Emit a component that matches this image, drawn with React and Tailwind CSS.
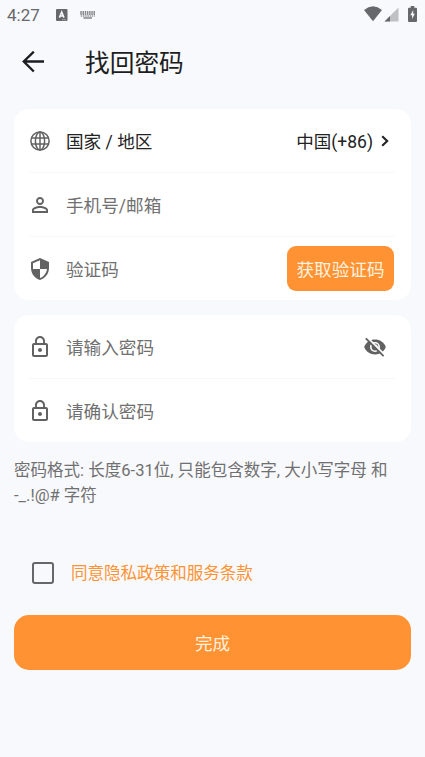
import { MdLockOutline, MdPersonOutline, MdSecurity } from 'react-icons/md';

const GlobeIcon = ({ className }) => (
  <svg className={className} viewBox="0 0 24 24" fill="none" stroke="currentColor" strokeWidth="1.5">
    <circle cx="12" cy="12" r="9.1" />
    <ellipse cx="12" cy="12" rx="4.6" ry="9.1" />
    <path d="M12 3v18M3.6 9h16.8M3.6 15h16.8" />
  </svg>
);

const EyeOffIcon = ({ className }) => (
  <svg className={className} viewBox="0 0 24 24">
    <path d="M1.2 12C3 7.2 7.2 4.6 12 4.6S21 7.2 22.8 12c-1.8 4.8-6 7.4-10.8 7.4S3 16.8 1.2 12z" fill="currentColor" />
    <circle cx="12" cy="12" r="4.2" fill="currentColor" stroke="#ffffff" strokeWidth="1.6" />
    <path d="M13 9.8q1.4.6 1.4 2" fill="none" stroke="#ffffff" strokeWidth="1" />
    <path d="M4 2.2 21.8 20" stroke="#ffffff" strokeWidth="1.8" />
    <path d="M2.8 3.4 20.6 21.2" stroke="currentColor" strokeWidth="1.9" />
  </svg>
);

const StatusBar = () => (
  <div className="flex h-7 items-center pl-[7px] pr-2 text-[#67686b]">
    <span className="w-[49px] pt-0.5 text-[17px] leading-7">4:27</span>
    <svg className="mt-px h-3 w-3" viewBox="0 0 12 12">
      <rect width="11.5" height="12" rx="1" fill="currentColor" />
      <path d="M3.4 8.6 5.7 3l2.3 5.6M4.2 7h3" fill="none" stroke="#f8f9fd" strokeWidth="1.5" />
      <path d="M6.3 10.8h1M8.5 10.8h1" stroke="#f8f9fd" strokeWidth="0.9" />
    </svg>
    <svg className="ml-3 mt-px h-2 w-4" viewBox="0 0 16 8">
      <path d="M0.3 1h15M0.3 3h15" stroke="currentColor" strokeWidth="1.3" strokeDasharray="1.5 0.7" />
      <path d="M0.8 5h14" stroke="currentColor" strokeWidth="1.2" strokeDasharray="1.5 0.7" />
      <path d="M3.5 7h8.5" stroke="currentColor" strokeWidth="1.2" />
    </svg>
    <div className="ml-auto flex items-center">
      <svg className="h-4 w-[18px]" viewBox="0 0 18 16">
        <path d="M0 4Q9-3.4 18 4L9 15.3z" fill="currentColor" />
      </svg>
      <svg className="ml-0.5 h-[15px] w-[15px]" viewBox="0 0 15 15">
        <path d="M0.5 14.5 14.5 0.5v14z" fill="#bfc0c2" />
        <path d="M0.5 14.5 6 9v5.5z" fill="currentColor" />
      </svg>
      <svg className="ml-[9px] mb-px h-4 w-[9px]" viewBox="0 0 9 16">
        <path d="M1 1.8h1.7V0h3.6v1.8H8a1 1 0 0 1 1 1V15a1 1 0 0 1-1 1H1a1 1 0 0 1-1-1V2.8a1 1 0 0 1 1-1z" fill="currentColor" />
        <path d="M5.2 4 2.3 9.2h1.8V13L6.8 7.8H5.2z" fill="#f8f9fd" />
      </svg>
    </div>
  </div>
);

const Header = () => (
  <div className="flex h-[68px] items-center pl-[22px]">
    <svg className="h-[22px] w-[22px]" viewBox="0 0 22 22" fill="none" stroke="#1d1e20" strokeWidth="2.4">
      <path d="M22 10.5H2M11.8 0.7 1.8 10.5l10 10" />
    </svg>
    <h1 className="ml-[41px] pt-[3px] text-[24.7px] leading-9 text-[#1d1e20]">找回密码</h1>
  </div>
);

const Row = ({ icon: Icon, label, dark, children }) => (
  <div className="flex h-[63px] items-center">
    <Icon className="h-6 w-6 shrink-0 text-[#626262]" />
    <span className={`ml-3.5 pt-[3px] text-[17.6px] ${dark ? 'text-[#222222]' : 'text-[#707070]'}`}>{label}</span>
    {children && <div className="ml-auto flex items-center">{children}</div>}
  </div>
);

const Divider = () => <div className="ml-px mr-4 h-px bg-[#f8f8f8]" />;

const App = () => {
  return (
    <div className="h-[757px] w-[425px] overflow-hidden bg-[#f8f9fd] font-[Roboto,'Noto_Sans_CJK_SC',sans-serif]">
      <StatusBar />
      <Header />

      <div className="px-3.5 pt-[13px]">
        {/* Account */}
        <div className="rounded-[15px] bg-white pl-3.5">
          <Row icon={GlobeIcon} label="国家 / 地区" dark>
            <span className="pt-[3px] text-[17.5px] text-[#222222]">中国(+86)</span>
            <svg className="ml-2 mr-[22px] h-3 w-2" viewBox="0 0 8 12" fill="none" stroke="#222222" strokeWidth="2.1">
              <path d="m1.2 1.2 5 4.8-5 4.8" />
            </svg>
          </Row>
          <Divider />
          <Row icon={MdPersonOutline} label="手机号/邮箱" />
          <Divider />
          <Row icon={MdSecurity} label="验证码">
            <button className="mr-[17px] h-[45px] w-[107px] rounded-[9px] bg-[#ff9333] pt-[3px] text-[17.6px] text-[#fff0df]">
              获取验证码
            </button>
          </Row>
        </div>

        {/* New password */}
        <div className="mt-[15px] rounded-[15px] bg-white pl-3.5">
          <Row icon={MdLockOutline} label="请输入密码">
            <EyeOffIcon className="mr-6 h-6 w-6 text-[#626262]" />
          </Row>
          <Divider />
          <Row icon={MdLockOutline} label="请确认密码" />
        </div>

        <p className="mt-4 text-[16.55px] leading-[25px] text-[#707070]">
          密码格式: 长度6-31位, 只能包含数字, 大小写字母 和
          <br />
          -_.!@# 字符
        </p>

        {/* Agreement */}
        <label className="mt-[54px] flex h-[22px] items-center pl-[17.5px]">
          <span className="h-[22px] w-[22px] rounded-[3px] border-2 border-[#66676b]" />
          <span className="ml-[17.5px] pt-0.5 text-[16.55px] text-[#ff9333]">同意隐私政策和服务条款</span>
        </label>

        <button className="mt-[31px] h-[54.5px] w-full rounded-[15px] bg-[#ff9333] pt-1 text-[17.6px] text-[#fff0df]">
          完成
        </button>
      </div>
    </div>
  );
};

export default App;
